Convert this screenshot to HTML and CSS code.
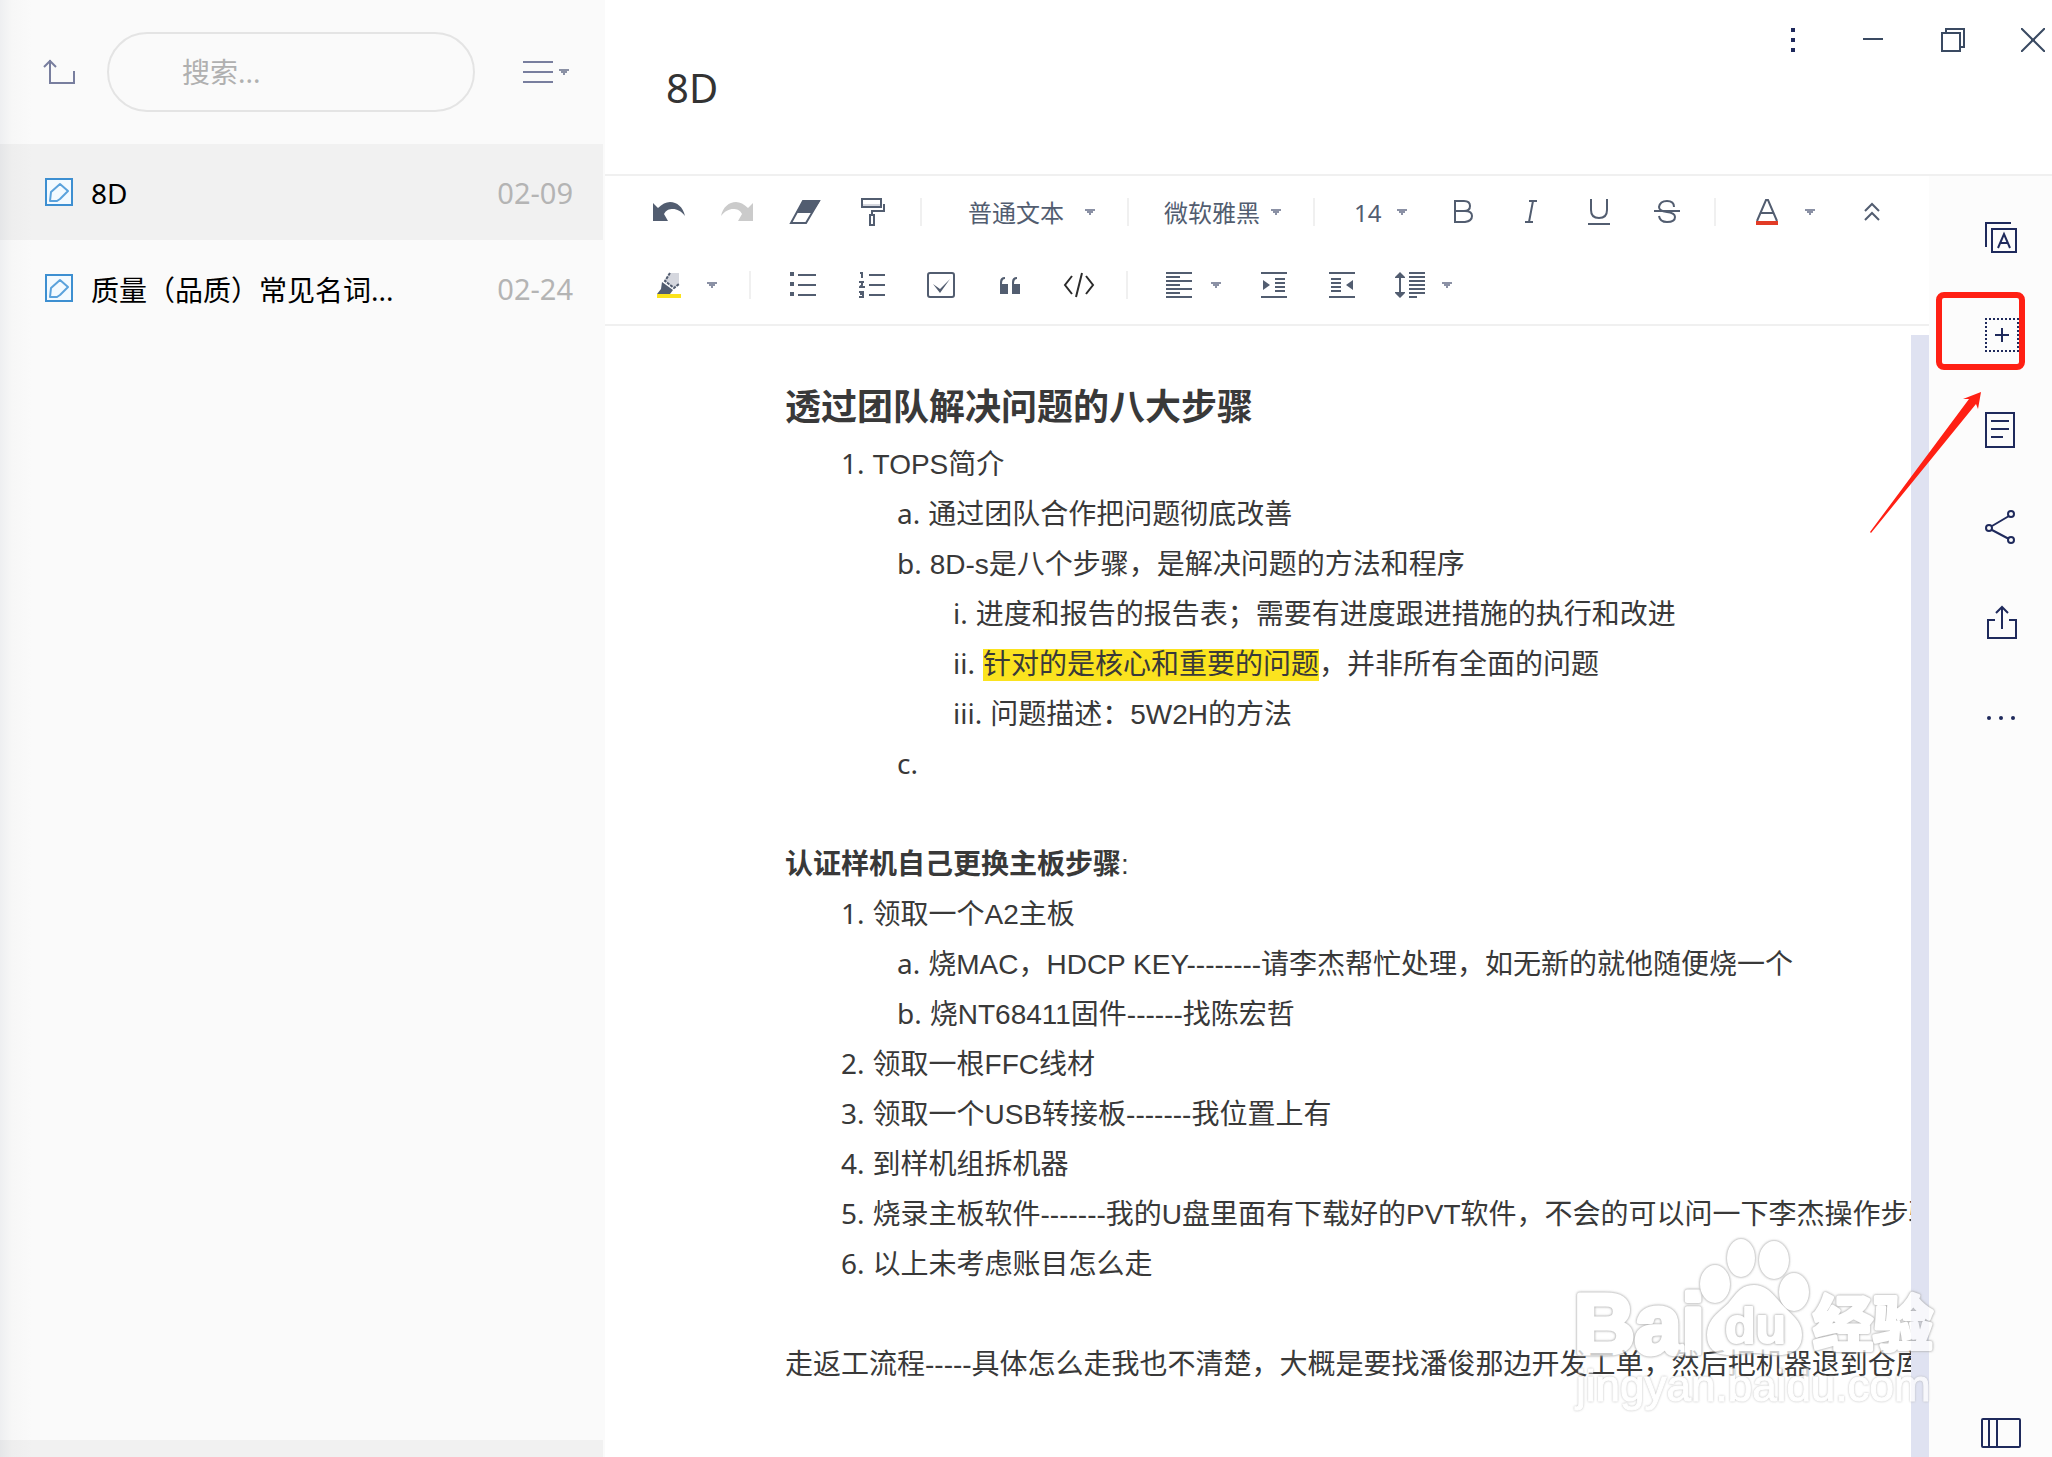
FILE: index.html
```html
<!DOCTYPE html>
<html lang="zh-CN">
<head>
  <meta charset="UTF-8" />
  <meta name="viewport" content="width=device-width, initial-scale=1" />
  <title>8D</title>
  <link rel="stylesheet" href="styles.css">
</head>
<body>
  <svg class="sprite" aria-hidden="true">
    <symbol id="caret" viewBox="0 0 10 6"><path d="M0 0h10v2H8v2H6v2H4V4H2V2H0z" fill="currentColor" /></symbol>
    <symbol id="note" viewBox="0 0 28 28">
      <rect x="1" y="1" width="26" height="26" fill="#f3faff" stroke="#3d8fd1" stroke-width="2" />
      <path d="M15 6l8 7-8 8-3 2H5l1-9z" fill="none" stroke="#5aa2dc" stroke-width="2" stroke-linejoin="round" />
    </symbol>
  </svg>

  <div class="app">
    <aside class="sidebar">
      <div class="sidebar-top">
        <button class="icon-btn" aria-label="返回上级">
          <svg width="32" height="26" viewBox="0 0 32 26"><path d="M7 1v23h24V12M1 8l6-6 6 6" /></svg>
        </button>
        <input class="search" type="text" placeholder="搜索..." aria-label="搜索" />
        <button class="icon-btn sort" aria-label="排序">
          <svg width="30" height="22" viewBox="0 0 30 22"><path d="M0 1h30M0 11h30M0 21h30" /></svg>
          <svg class="caret" width="10" height="6"><use href="#caret" /></svg>
        </button>
      </div>
      <nav class="notes">
        <a class="note active" href="#">
          <svg width="28" height="28"><use href="#note" /></svg>
          <span class="note-name">8D</span>
          <time class="note-date">02-09</time>
        </a>
        <a class="note" href="#">
          <svg width="28" height="28"><use href="#note" /></svg>
          <span class="note-name">质量（品质）常见名词...</span>
          <time class="note-date">02-24</time>
        </a>
      </nav>
      <div class="sidebar-foot"></div>
    </aside>

    <main class="main">
      <header class="header">
        <h1 class="title">8D</h1>
        <div class="window-btns">
          <button aria-label="菜单"><svg width="24" height="24" viewBox="0 0 24 24"><path d="M10 0h4v4h-4zM10 10h4v4h-4zM10 20h4v4h-4z" fill="#1f2a5c" /></svg></button>
          <button aria-label="最小化"><svg class="line" width="24" height="24" viewBox="0 0 24 24"><path d="M2 11h20" /></svg></button>
          <button aria-label="还原"><svg class="line" width="24" height="24" viewBox="0 0 24 24"><path d="M1 5h18v18H1zM5 5V1h18v18h-4" /></svg></button>
          <button aria-label="关闭"><svg class="line" width="24" height="24" viewBox="0 0 24 24"><path d="M0 0l24 24M24 0L0 24M10 12h4" /></svg></button>
        </div>
      </header>

      <div class="workspace">
        <section class="editor">
          <div class="toolbar">
            <div class="tool-row">
              <div class="group">
                <button class="tool" aria-label="撤销"><svg width="32" height="20" viewBox="0 0 32 20"><path class="fill" d="M0 1l5 5C9 2 13 0 17 0c7 0 13 5 15 14C28 9 24 7 20 7c-4 0-7 1-9 5l4 7H0z" /></svg></button>
                <button class="tool off" aria-label="重做"><svg width="32" height="20" viewBox="0 0 32 20"><path class="fill" d="M32 1l-5 5C23 2 19 0 15 0 8 0 2 5 0 14 4 9 8 7 12 7c4 0 7 1 9 5l-4 7h15z" /></svg></button>
                <button class="tool" aria-label="清除格式"><svg width="32" height="24" viewBox="0 0 32 24"><path d="M14 1h16L17 23H2z" /><path class="fill" d="M14 1h17l-8 12H7z" /></svg></button>
                <button class="tool" aria-label="格式刷"><svg width="24" height="28" viewBox="0 0 24 28"><path class="pale" d="M1 6h19v3H1z" /><path d="M1 1h19v8H1zM23 6v7H11v4M9 17h4v10H9z" /></svg></button>
              </div>
              <span class="divider"></span>
              <label class="picker paragraph">
                <select aria-label="段落样式"><option>普通文本</option></select>
                <svg class="caret" width="10" height="6"><use href="#caret" /></svg>
              </label>
              <span class="divider"></span>
              <label class="picker font">
                <select aria-label="字体"><option>微软雅黑</option></select>
                <svg class="caret" width="10" height="6"><use href="#caret" /></svg>
              </label>
              <span class="divider"></span>
              <label class="picker size">
                <select aria-label="字号"><option>14</option></select>
                <svg class="caret" width="10" height="6"><use href="#caret" /></svg>
              </label>
              <div class="group marks">
                <button class="tool" aria-label="加粗"><svg width="20" height="26" viewBox="0 0 20 26"><path d="M2 2h9q6 0 6 5t-6 5H2zM2 12h10q7 0 7 5t-7 6H2z" /></svg></button>
                <button class="tool" aria-label="斜体"><svg width="14" height="26" viewBox="0 0 14 26"><path d="M5 2h8M1 23h8M9 2L5 23" /></svg></button>
                <button class="tool" aria-label="下划线"><svg width="22" height="26" viewBox="0 0 22 26"><path d="M3 0v11q0 8 8 8t8-8V0M0 25h22" /></svg></button>
                <button class="tool" aria-label="删除线"><svg width="26" height="26" viewBox="0 0 26 26"><path d="M20 8q0-6-7-6T5 8q0 4 8 5 8 1 8 5 0 5-8 5-7 0-8-6M0 12h26" /></svg></button>
              </div>
              <span class="divider"></span>
              <div class="group combo">
                <button class="tool" aria-label="字体颜色"><svg width="24" height="26" viewBox="0 0 24 26"><path d="M2 22L11 1h2l9 21M6 14h12" /><path class="text-color" d="M1 22h22v4H1z" /></svg></button>
                <button class="drop" aria-label="选择字体颜色"><svg class="caret" width="10" height="6"><use href="#caret" /></svg></button>
              </div>
              <button class="tool" aria-label="收起工具栏"><svg width="16" height="20" viewBox="0 0 16 20"><path d="M1 9l7-7 7 7M1 18l7-7 7 7" /></svg></button>
            </div>

            <div class="tool-row">
              <div class="group combo">
                <button class="tool" aria-label="突出显示"><svg width="26" height="28" viewBox="0 0 26 28"><path class="pale" d="M14 2h9v11l-5 4-9-7z" /><path d="M14 2L9 10l9 7 5-4" stroke-dasharray="3 1" /><path class="fill" d="M6 11l11 8-3 4H1l4-5z" /><path class="mark-color" d="M1 23h24v4H1z" /></svg></button>
                <button class="drop" aria-label="选择突出显示颜色"><svg class="caret" width="10" height="6"><use href="#caret" /></svg></button>
              </div>
              <span class="divider"></span>
              <div class="group lists">
                <button class="tool" aria-label="无序列表"><svg width="26" height="26" viewBox="0 0 26 26"><path d="M8 3h18M8 13h18M8 23h18" /><path class="fill" d="M0 0h4v4H0zM0 10h4v4H0zM0 20h4v4H0z" /></svg></button>
                <button class="tool" aria-label="有序列表"><svg width="26" height="26" viewBox="0 0 26 26"><path d="M10 3h16M10 13h16M10 23h16M1 1h2v5M0 10h5M3 10v3l-2 2h5M0 20h4v5H0M1 22h3" /></svg></button>
                <button class="tool" aria-label="待办"><svg width="28" height="26" viewBox="0 0 28 26"><rect x="1" y="1" width="26" height="24" rx="2" /><path class="fill" d="M6 12l7 5 10-10-10 14z" /></svg></button>
                <button class="tool" aria-label="引用"><svg width="22" height="18" viewBox="0 0 22 18"><path class="fill" d="M1 18V6q0-5 5-5v2Q3 3 3 8h6v10zM13 18V6q0-5 5-5v2q-3 0-3 5h6v10z" /></svg></button>
                <button class="tool" aria-label="代码"><svg class="code" width="32" height="26" viewBox="0 0 32 26"><path d="M9 4L2 13l7 9M23 4l7 9-7 9M19 1l-6 24" /></svg></button>
              </div>
              <span class="divider"></span>
              <div class="group aligns">
                <div class="group tight">
                  <button class="tool" aria-label="对齐"><svg width="26" height="26" viewBox="0 0 26 26"><path d="M0 1h26M0 5h14M0 9h26M0 13h14M0 17h26M0 21h14M0 25h26" /></svg></button>
                  <button class="drop" aria-label="选择对齐"><svg class="caret" width="10" height="6"><use href="#caret" /></svg></button>
                </div>
                <button class="tool" aria-label="增加缩进"><svg width="26" height="26" viewBox="0 0 26 26"><path d="M0 1h26M14 7h10M14 11h10M14 15h10M14 19h10M0 25h26" /><path class="fill" d="M2 8l7 5-7 5z" /></svg></button>
                <button class="tool" aria-label="减少缩进"><svg width="26" height="26" viewBox="0 0 26 26"><path d="M0 1h26M2 7h10M2 11h10M2 15h10M2 19h10M0 25h26" /><path class="fill" d="M24 8l-7 5 7 5z" /></svg></button>
                <div class="group tight">
                  <button class="tool" aria-label="行距"><svg width="30" height="26" viewBox="0 0 30 26"><path d="M14 1h16M14 5h16M14 9h16M14 13h16M14 17h16M14 21h16M14 25h8M5 3v20" /><path class="fill" d="M5 0l5 5v1H0V5zM5 26l5-5v-1H0v1z" /></svg></button>
                  <button class="drop" aria-label="选择行距"><svg class="caret" width="10" height="6"><use href="#caret" /></svg></button>
                </div>
              </div>
            </div>
          </div>

          <div class="page">
            <article class="doc">
              <h2>透过团队解决问题的八大步骤</h2>
              <ol class="decimal">
                <li>TOPS简介
                  <ol class="alpha">
                    <li>通过团队合作把问题彻底改善</li>
                    <li>8D-s是八个步骤，是解决问题的方法和程序
                      <ol class="roman">
                        <li>进度和报告的报告表；需要有进度跟进措施的执行和改进</li>
                        <li><mark>针对的是核心和重要的问题</mark>，并非所有全面的问题</li>
                        <li>问题描述：5W2H的方法</li>
                      </ol>
                    </li>
                    <li></li>
                  </ol>
                </li>
              </ol>
              <p class="lead"><b>认证样机自己更换主板步骤</b>:</p>
              <ol class="decimal">
                <li>领取一个A2主板
                  <ol class="alpha">
                    <li>烧MAC，HDCP KEY--------请李杰帮忙处理，如无新的就他随便烧一个</li>
                    <li>烧NT68411固件------找陈宏哲</li>
                  </ol>
                </li>
                <li>领取一根FFC线材</li>
                <li>领取一个USB转接板-------我位置上有</li>
                <li>到样机组拆机器</li>
                <li>烧录主板软件-------我的U盘里面有下载好的PVT软件，不会的可以问一下李杰操作步骤</li>
                <li>以上未考虑账目怎么走</li>
              </ol>
              <p class="lead">走返工流程-----具体怎么走我也不清楚，大概是要找潘俊那边开发工单，然后把机器退到仓库</p>
            </article>
            <div class="scrollbar"></div>
          </div>
        </section>

        <aside class="rail">
          <button aria-label="文本识别"><svg width="40" height="40" viewBox="0 0 40 40"><path d="M5 29V5h25M11 11h24v23H11z" /><path d="M17 30l6-14 6 14M19 25h8" /></svg></button>
          <button class="marked" aria-label="添加区域"><svg width="40" height="40" viewBox="0 0 40 40"><path d="M4 5h34M4 37h34M5 4v34M37 4v34" stroke-dasharray="2 2" /><path d="M14 21h14M21 14v14" /></svg></button>
          <button aria-label="笔记"><svg width="40" height="40" viewBox="0 0 40 40"><path d="M5 3h28v34H5zM10 11h18M10 19h18M10 27h12" /></svg></button>
          <button aria-label="分享"><svg width="40" height="40" viewBox="0 0 40 40"><circle cx="30" cy="8" r="3" /><circle cx="8" cy="22" r="3" /><circle cx="30" cy="34" r="3" /><path d="M11 20l17-10M11 24l17 9" /></svg></button>
          <button aria-label="导出"><svg width="40" height="40" viewBox="0 0 40 40"><path d="M14 18H7v18h28V18h-7M21 27V5M15 11l6-6 6 6" /></svg></button>
          <button aria-label="更多"><svg width="40" height="40" viewBox="0 0 40 40"><g class="dots"><circle cx="8" cy="20" r="2" /><circle cx="20" cy="20" r="2" /><circle cx="32" cy="20" r="2" /></g></svg></button>
          <button class="layout" aria-label="切换布局"><svg width="40" height="30" viewBox="0 0 40 30"><rect x="1" y="1" width="38" height="28" rx="1" /><path d="M8 1v28M16 1v28" /></svg></button>
          <svg class="arrow" width="112" height="142" viewBox="0 0 112 142"><path d="M111 0L93 7h6L0 140l1 1L106 12l2 5z" /></svg>
        </aside>
      </div>
    </main>

    <svg class="watermark" width="390" height="200" viewBox="0 0 390 200">
      <text x="4" y="123" class="wm-big">Bai</text>
      <g class="wm-paw">
        <ellipse cx="145" cy="54" rx="14" ry="18" />
        <ellipse cx="171" cy="28" rx="13" ry="18" />
        <ellipse cx="204" cy="30" rx="14" ry="18" />
        <ellipse cx="224" cy="62" rx="14" ry="18" />
        <path d="M184 56c-14 0-18 10-25 18-9 9-21 15-21 31 0 13 8 19 19 19 10 0 17-2 27-2s17 3 28 2c12-1 19-7 19-19 0-14-11-20-20-30-8-9-14-19-27-19z" />
      </g>
      <text x="155" y="113" class="wm-du">du</text>
      <text x="243" y="116" class="wm-cn">经验</text>
      <text x="6" y="171" class="wm-url">jingyan.baidu.com</text>
    </svg>
  </div>
</body>
</html>
```
FILE: styles.css
```css
*,
*::before,
*::after {
  box-sizing: border-box;
}

body {
  margin: 0;
  background: #fff;
  font-family: "Noto Sans", "Noto Sans CJK SC", sans-serif;
  font-size: 28px;
  color: #000;
}

button {
  border: none;
  padding: 0;
  background: none;
  cursor: pointer;
}

svg {
  display: block;
  flex: none;
}

.sprite {
  position: absolute;
  width: 0;
  height: 0;
}

.app {
  position: relative;
  display: flex;
  height: 100vh;
  overflow: hidden;
}

/* note list */
.sidebar {
  flex: none;
  width: 605px;
  display: flex;
  flex-direction: column;
  background: linear-gradient(to right, #eeeff1, #f7f7f7 12px, #fafafa 32px);
}

.sidebar-top {
  display: flex;
  align-items: center;
  height: 144px;
  padding: 0 36px 0 43px;
}

.icon-btn {
  display: flex;
  align-items: center;
  gap: 6px;
  color: #787e9e;
}

.icon-btn path {
  fill: none;
  stroke: #787e9e;
  stroke-width: 2;
}

.search {
  flex: 1;
  min-width: 0;
  height: 80px;
  margin: 0 48px 0 32px;
  padding: 0 73px;
  border: 2px solid #e4e4e4;
  border-radius: 40px;
  background: transparent;
  font: inherit;
}

.search::placeholder {
  color: #b0b0b0;
}

.note {
  display: flex;
  align-items: center;
  height: 96px;
  margin-right: 2px;
  padding: 0 30px 0 45px;
  color: #000;
  text-decoration: none;
}

.note.active,
.sidebar-foot {
  background: rgba(0, 0, 0, 0.036);
}

.note-name {
  flex: 1;
  margin-left: 18px;
  padding-top: 2px;
}

.note-date {
  font-size: 29px;
  color: #b4b4b4;
}

.sidebar-foot {
  height: 17px;
  margin: auto 2px 0 0;
}

/* header */
.main {
  flex: 1;
  min-width: 0;
  display: flex;
  flex-direction: column;
}

.header {
  display: flex;
  justify-content: space-between;
  align-items: flex-start;
  height: 176px;
  border-bottom: 2px solid #f0f0f0;
}

.title {
  margin: 58px 0 0 61px;
  font-size: 40px;
  line-height: 60px;
  font-weight: 400;
  color: #333;
}

.window-btns {
  display: flex;
  gap: 42px;
  padding-top: 21px;
}

.window-btns button {
  display: grid;
  place-items: center;
  width: 38px;
  height: 38px;
}

.line {
  fill: none;
  stroke: #3a4a62;
  stroke-width: 2;
}

.workspace {
  flex: 1;
  min-height: 0;
  display: flex;
}

.editor {
  flex: 1;
  min-width: 0;
  display: flex;
  flex-direction: column;
}

/* toolbar */
.toolbar {
  display: flex;
  flex-direction: column;
  gap: 37px;
  height: 150px;
  padding: 18px 0 0 46px;
  border-bottom: 2px solid #f0f0f0;
}

.tool-row,
.group,
.picker {
  display: flex;
  align-items: center;
}

.group {
  gap: 32px;
}

.tool {
  display: grid;
  place-items: center;
  width: 36px;
  height: 36px;
}

.tool svg {
  fill: none;
  stroke: #525d70;
  stroke-width: 2;
}

.tool .fill {
  fill: #525d70;
  stroke: none;
}

.tool .pale {
  fill: #d5d7de;
  stroke: none;
}

.tool .text-color {
  fill: #e23b26;
  stroke: none;
}

.tool .mark-color {
  fill: #fbe31b;
  stroke: none;
}

.tool.off .fill {
  fill: #cbcbcb;
}

.tool .code {
  stroke: #2b2b2b;
}

.divider {
  width: 2px;
  height: 28px;
  margin: 0 29px;
  background: #f0f0f0;
}

.caret {
  color: #8b91a5;
}

.drop {
  padding: 6px 3px 6px 0;
}

.picker {
  padding-right: 3px;
}

.picker select {
  appearance: none;
  border: none;
  padding: 0;
  background: none;
  font: inherit;
  font-size: 24px;
  height: 36px;
  color: #525d70;
}

.paragraph {
  margin-left: 17px;
  gap: 21px;
}

.font {
  margin-left: 6px;
  gap: 11px;
}

.size {
  margin-left: 10px;
  gap: 15px;
}

.marks {
  margin-left: 35px;
}

.combo {
  gap: 20px;
}

.marks + .divider + .combo {
  margin-left: 4px;
}

.combo + .tool {
  margin-left: 36px;
}

.tight {
  gap: 14px;
}

.lists {
  gap: 33px;
  margin-left: 5px;
}

.aligns {
  margin-left: 4px;
}

/* document */
.page {
  flex: 1;
  min-height: 0;
  display: flex;
}

.doc {
  flex: 1;
  min-width: 0;
  overflow: hidden;
  padding: 50px 0 0 180px;
  font-family: "Liberation Sans", "Noto Sans CJK SC", sans-serif;
  line-height: 50px;
  white-space: nowrap;
  color: #393939;
}

.doc h2 {
  margin: 0;
  font-size: 36px;
  line-height: 64px;
}

.doc p {
  margin: 0;
}

.doc .lead {
  margin-top: 50px;
}

.doc ol {
  margin: 0;
  padding-left: 56px;
  list-style: none;
  counter-reset: item;
}

.doc li {
  min-height: 50px;
  counter-increment: item;
}

.doc li::before {
  margin-right: 8px;
  font-family: "Noto Sans", sans-serif;
  line-height: 1;
}

.decimal > li::before {
  content: counter(item) ".";
}

.alpha > li::before {
  content: counter(item, lower-alpha) ".";
}

.roman > li::before {
  content: counter(item, lower-roman) ".";
}

.doc mark {
  display: inline-block;
  line-height: 32px;
  background: #fbe31f;
  color: inherit;
}

.scrollbar {
  width: 18px;
  margin-top: 9px;
  background: #dfe2f1;
}

/* right rail */
.rail {
  position: relative;
  flex: none;
  width: 123px;
  display: flex;
  flex-direction: column;
  align-items: flex-end;
  padding: 14px 31px 0 0;
  background: #fcfcfc;
}

.rail button {
  position: relative;
  display: grid;
  place-items: center;
  width: 40px;
  height: 96px;
}

.rail button svg {
  fill: none;
  stroke: #1f2a5c;
  stroke-width: 2;
}

.rail .dots {
  fill: #1f2a5c;
  stroke: none;
}

.rail .layout {
  height: 48px;
  margin-top: auto;
}

.marked::after {
  content: "";
  position: absolute;
  top: 6px;
  right: -4px;
  width: 89px;
  height: 78px;
  border: 6px solid #ff2014;
  border-radius: 8px;
}

.arrow {
  position: absolute;
  top: 216px;
  right: 70px;
  fill: #ff2014;
}

/* watermark */
.watermark {
  position: absolute;
  right: 92px;
  bottom: 27px;
  fill: #fff;
  stroke: #fff;
  stroke-width: 2;
  stroke-linejoin: round;
  font-family: "Liberation Sans", "Noto Sans CJK SC", sans-serif;
  font-weight: 700;
  opacity: 0.75;
  pointer-events: none;
}

.watermark text,
.wm-paw {
  filter: drop-shadow(0 0 1px #999) drop-shadow(0 0 1px #bbb);
}

.wm-big {
  font-size: 84px;
  stroke-width: 5;
}

.wm-du {
  font-size: 50px;
}

.wm-cn {
  font-size: 60px;
  stroke-width: 4;
}

.watermark .wm-url {
  font-size: 44px;
  font-weight: 400;
  stroke-width: 1;
  filter: drop-shadow(0 0 1px #aaa);
}
```
